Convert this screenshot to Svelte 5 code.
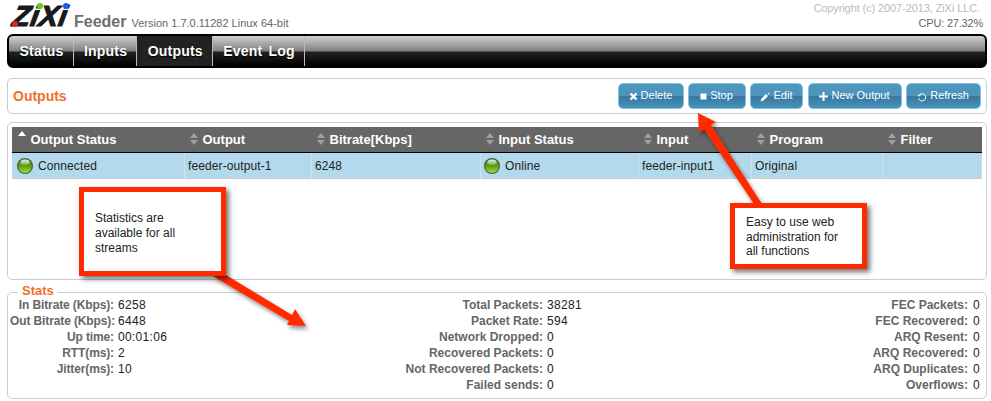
<script>
	const tabs = ['Status', 'Inputs', 'Outputs', 'Event Log'];
	const cols = [
		{ label: 'Output Status', w: 173, sort: 'asc' },
		{ label: 'Output', w: 127 },
		{ label: 'Bitrate[Kbps]', w: 169 },
		{ label: 'Input Status', w: 158 },
		{ label: 'Input', w: 113 },
		{ label: 'Program', w: 131 },
		{ label: 'Filter', w: 99 }
	];
	const cells = ['Connected', 'feeder-output-1', '6248', 'Online', 'feeder-input1', 'Original', ''];
	const stats = [
		[
			['In Bitrate (Kbps)', '6258'],
			['Out Bitrate (Kbps)', '6448'],
			['Up time', '00:01:06'],
			['RTT(ms)', '2'],
			['Jitter(ms)', '10']
		],
		[
			['Total Packets', '38281'],
			['Packet Rate', '594'],
			['Network Dropped', '0'],
			['Recovered Packets', '0'],
			['Not Recovered Packets', '0'],
			['Failed sends', '0']
		],
		[
			['FEC Packets', '0'],
			['FEC Recovered', '0'],
			['ARQ Resent', '0'],
			['ARQ Recovered', '0'],
			['ARQ Duplicates', '0'],
			['Overflows', '0']
		]
	];
</script>

{#snippet led()}
	<svg class="led" width="16" height="16" viewBox="0 0 16 16">
		<circle cx="8" cy="8" r="8" fill="#4a5a44" />
		<circle cx="8" cy="8" r="6.9" fill="url(#ledfill)" />
		<ellipse cx="8" cy="4.2" rx="4.6" ry="2.6" fill="url(#ledshine)" />
	</svg>
{/snippet}

<svg class="defs" width="0" height="0">
	<defs>
		<linearGradient id="ledfill" x1="0" y1="0" x2="0" y2="1">
			<stop offset="0" stop-color="#3f7d0c" />
			<stop offset="0.55" stop-color="#5fa514" />
			<stop offset="1" stop-color="#a6dc3e" />
		</linearGradient>
		<linearGradient id="ledshine" x1="0" y1="0" x2="0" y2="1">
			<stop offset="0" stop-color="#fff" stop-opacity="0.9" />
			<stop offset="1" stop-color="#fff" stop-opacity="0.25" />
		</linearGradient>
	</defs>
</svg>

<div class="page">
	<header>
		<div class="brand">
			<div class="logo">
				<span class="zixi">ZiXi</span>
				<i class="dot red"></i>
				<i class="dot green"></i>
				<i class="dot blue"></i>
			</div>
			<span class="feeder">Feeder</span>
			<span class="version">Version 1.7.0.11282 Linux 64-bit</span>
		</div>
		<div class="about">
			<div class="copy">Copyright (c) 2007-2013, ZiXi LLC.</div>
			<div class="cpu">CPU: 27.32%</div>
		</div>
	</header>

	<nav>
		{#each tabs as tab}
			<a class:active={tab === 'Outputs'} href="#top">{tab}</a>
		{/each}
	</nav>

	<section class="toolbar">
		<h2>Outputs</h2>
		<div class="buttons">
			<button style="width:66px">
				<svg width="9" height="9" viewBox="0 0 9 9"><path d="M1.5 1.5l6 6M7.5 1.5l-6 6" stroke="#fff" stroke-width="2.4" /></svg>
				Delete
			</button>
			<button style="width:58px">
				<svg width="7" height="7" viewBox="0 0 7 7"><rect x="0.5" y="0.5" width="6" height="6" fill="#fff" /></svg>
				Stop
			</button>
			<button style="width:53px">
				<svg width="11" height="11" viewBox="0 0 11 11"><path d="M0.5 10.5l1-3 4.5-4.5 2 2-4.5 4.5z" fill="#fff" /><path d="M7.5 2.5l1-1 1 1-1 1z" fill="#fff" /></svg>
				Edit
			</button>
			<button class="wide" style="width:94px">
				<svg width="9" height="9" viewBox="0 0 9 9"><path d="M4.5 0v9M0 4.5h9" stroke="#fff" stroke-width="2" /></svg>
				New Output
			</button>
			<button style="width:75px">
				<svg width="10" height="10" viewBox="0 0 10 10"><path d="M2.2 3.2a3.6 3.6 0 1 1-.6 3M.8 3.4l2 .6.4-2" fill="none" stroke="#fff" /></svg>
				Refresh
			</button>
		</div>
	</section>

	<section class="content">
		<table>
			<thead>
				<tr>
					{#each cols as col}
						<th style="width:{col.w}px">
							<div class="head">
								<span class={col.sort ?? 'sort'}></span>
								{col.label}
							</div>
						</th>
					{/each}
				</tr>
			</thead>
			<tbody>
				<tr>
					{#each cells as cell}
						<td>
							<div class="cell">
								{#if cell === 'Connected' || cell === 'Online'}
									{@render led()}
								{/if}
								{cell}
							</div>
						</td>
					{/each}
				</tr>
			</tbody>
		</table>
	</section>

	<fieldset>
		<legend>Stats</legend>
		<div class="stats">
			{#each stats as col}
				<dl>
					{#each col as [k, v]}
						<dt>{k}:</dt>
						<dd>{v}</dd>
					{/each}
				</dl>
			{/each}
		</div>
	</fieldset>

	<div class="note note1">Statistics are available for all streams</div>
	<div class="note note2">Easy to use web administration for all functions</div>
	<svg class="arrows" width="991" height="401" viewBox="0 0 991 401">
		<defs>
			<filter id="sh" x="-20%" y="-20%" width="140%" height="140%">
				<feDropShadow dx="2" dy="3" stdDeviation="2" flood-color="#000" flood-opacity="0.45" />
			</filter>
		</defs>
		<g filter="url(#sh)" fill="#ff2a00">
			<path d="M211 275L226 275L292 315L295 309L306 326L287 325L289 321Z" />
			<path d="M698 113L716 122L711 125L762 204L754 204L704 129L699 133Z" />
		</g>
	</svg>
</div>

<style>
	:global(body) {
		margin: 0;
		background: #fff;
	}
	.defs {
		position: absolute;
	}
	.page {
		position: relative;
		width: 991px;
		height: 401px;
		overflow: hidden;
		padding: 0 4px 0 7px;
		box-sizing: border-box;
		font-family: 'Liberation Sans', Arial, sans-serif;
		font-size: 12px;
		letter-spacing: 0.1px;
		color: #222;
	}
	header {
		display: flex;
		justify-content: space-between;
		height: 34px;
	}
	.brand {
		display: flex;
		align-items: flex-end;
		height: 32px;
	}
	.logo {
		position: relative;
		width: 62px;
		height: 30px;
		margin-left: 5px;
	}
	.zixi {
		position: absolute;
		left: 1px;
		top: -2px;
		font-size: 29px;
		font-weight: 700;
		font-style: italic;
		letter-spacing: 0.3px;
		color: #1a1a1a;
		-webkit-text-stroke: 1.2px #1a1a1a;
		transform: skewX(-10deg);
	}
	.dot {
		position: absolute;
		width: 6px;
		height: 6px;
		border-radius: 50%;
	}
	.red {
		left: 0;
		top: 19px;
		background: #d8262a;
	}
	.green {
		left: 25px;
		top: 1px;
		background: #6cc522;
	}
	.blue {
		left: 51px;
		top: 1px;
		background: #1b5ee0;
	}
	.feeder {
		font-size: 16px;
		font-weight: 700;
		color: #6e6e6e;
		letter-spacing: 0;
		line-height: 20px;
	}
	.version {
		font-size: 11px;
		color: #666;
		margin-left: 5px;
		line-height: 18px;
		letter-spacing: 0;
	}
	.about {
		text-align: right;
		font-size: 11px;
		padding-top: 2px;
	}
	.copy {
		color: #bbb;
		margin-right: 7px;
		letter-spacing: -0.1px;
	}
	.cpu {
		color: #666;
		margin-top: 3px;
		margin-right: 4px;
		letter-spacing: -0.2px;
	}
	nav {
		display: flex;
		height: 34px;
		width: 980px;
		box-sizing: border-box;
		border: 2px solid #000;
		border-radius: 6px;
		overflow: hidden;
		background: linear-gradient(#d0d0d0 0, #808080 15px, #222 16px, #000 100%);
	}
	nav a {
		display: flex;
		align-items: center;
		padding: 0 9px 0 10.5px;
		color: #fff;
		font-size: 14px;
		font-weight: 700;
		text-decoration: none;
		border-right: 1px solid #bbb;
		letter-spacing: 0.2px;
		word-spacing: 2px;
		text-shadow: 0 1px 1px #000;
	}
	nav a.active {
		background: #222;
	}
	.toolbar {
		display: flex;
		align-items: center;
		justify-content: space-between;
		width: 980px;
		height: 36px;
		box-sizing: border-box;
		margin-top: 10px;
		padding: 0 5px;
		border: 1px solid #ccc;
		border-radius: 5px;
	}
	h2 {
		margin: 0;
		font-size: 14px;
		letter-spacing: 0;
		color: #f0702a;
	}
	.buttons {
		display: flex;
		gap: 4px;
	}
	button {
		display: flex;
		align-items: center;
		justify-content: center;
		gap: 3px;
		height: 26px;
		padding: 0 1px 2px 0;
		color: #fff;
		font: 11px 'Liberation Sans', Arial, sans-serif;
		border: 1px solid #7cc4e4;
		border-radius: 5px;
		background: linear-gradient(#4d95bc 0 50%, #35789f 50%, #4a90b8 100%);
	}
	button svg {
		margin-top: 3px;
	}
	.wide {
		margin-left: 1px;
	}
	.content {
		width: 980px;
		height: 158px;
		box-sizing: border-box;
		margin-top: 8px;
		padding: 4px;
		border: 1px solid #ccc;
		border-radius: 5px;
	}
	table {
		border-collapse: separate;
		border-spacing: 0;
		table-layout: fixed;
		width: 970px;
	}
	th {
		height: 26px;
		padding: 0 0 1px 4.5px;
		box-sizing: border-box;
		background: #666;
		border-bottom: 1px solid #000;
		color: #fff;
		font-size: 13px;
		text-align: left;
		letter-spacing: 0;
	}
	th:first-child {
		padding-left: 5.5px;
	}
	.head,
	.cell {
		display: flex;
		align-items: center;
		white-space: nowrap;
	}
	.head span {
		position: relative;
		flex: none;
		width: 8px;
		height: 14px;
		margin-right: 5px;
	}
	.sort::before,
	.sort::after,
	.asc::before {
		content: '';
		position: absolute;
		left: 0;
		border: 4px solid transparent;
		border-top-width: 0;
		border-bottom: 5px solid #a0a0a0;
		top: 1px;
	}
	.sort::after {
		border-bottom-width: 0;
		border-top: 5px solid #a0a0a0;
		top: 8px;
	}
	.asc::before {
		border-bottom-color: #fff;
		top: -1px;
	}
	td {
		height: 26px;
		padding: 0 0 0 3px;
		box-sizing: border-box;
		background: #b2daec;
		border-right: 1px solid #cde3ee;
		border-bottom: 1px solid #ccc;
		font-size: 12px;
	}
	td:first-child {
		padding-left: 5px;
	}
	.led {
		flex: none;
		margin-right: 5px;
	}
	fieldset {
		width: 980px;
		height: 113px;
		box-sizing: border-box;
		margin: 6px 0 0;
		padding: 0 6px 0 2px;
		border: 1px solid #ccc;
		border-radius: 5px;
	}
	legend {
		position: relative;
		top: -2px;
		margin-left: 8px;
		padding: 0 4px;
		font-size: 13px;
		font-weight: 700;
		color: #f0702a;
		letter-spacing: 0;
		line-height: 13px;
	}
	.stats {
		display: grid;
		grid-template-columns: 326px 322px 1fr;
		margin-top: -2px;
	}
	dl {
		display: grid;
		grid-auto-rows: 16px;
		margin: 0;
		line-height: 16px;
	}
	dl:nth-child(1) {
		grid-template-columns: 104px auto;
	}
	dl:nth-child(1) dt {
		letter-spacing: -0.12px;
	}
	dl:nth-child(2) {
		grid-template-columns: 207px auto;
	}
	dl:nth-child(3) {
		grid-template-columns: 1fr 12px;
	}
	dl:nth-child(3) dd {
		margin-left: 5px;
	}
	dt {
		font-weight: 700;
		color: #666;
		text-align: right;
		letter-spacing: 0;
		white-space: nowrap;
	}
	dd {
		margin: 0 0 0 4px;
		letter-spacing: 0.3px;
	}
	.note {
		position: absolute;
		box-sizing: border-box;
		background: #fff;
		border: 5px solid #ff2a00;
		box-shadow: 3px 3px 5px rgba(0, 0, 0, 0.55);
		font-size: 12px;
		letter-spacing: 0;
		color: #222;
		z-index: 2;
	}
	.note1 {
		left: 79px;
		top: 187px;
		width: 147px;
		height: 89px;
		padding: 19px 30px 0 11px;
		line-height: 15px;
	}
	.note2 {
		left: 730px;
		top: 203px;
		width: 137px;
		height: 66px;
		padding: 7px 10px 0 11px;
		line-height: 14.5px;
	}
	.arrows {
		position: absolute;
		left: 0;
		top: 0;
		z-index: 1;
	}
</style>
